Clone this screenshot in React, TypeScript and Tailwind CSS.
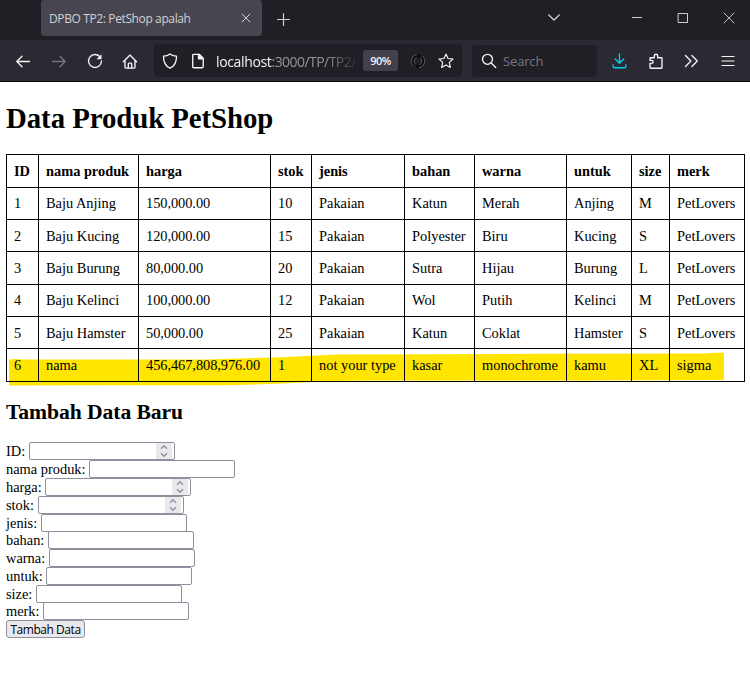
import type { ReactNode } from "react";

const header = ["ID", "nama produk", "harga", "stok", "jenis", "bahan", "warna", "untuk", "size", "merk"];
const rows = [
  ["1", "Baju Anjing", "150,000.00", "10", "Pakaian", "Katun", "Merah", "Anjing", "M", "PetLovers"],
  ["2", "Baju Kucing", "120,000.00", "15", "Pakaian", "Polyester", "Biru", "Kucing", "S", "PetLovers"],
  ["3", "Baju Burung", "80,000.00", "20", "Pakaian", "Sutra", "Hijau", "Burung", "L", "PetLovers"],
  ["4", "Baju Kelinci", "100,000.00", "12", "Pakaian", "Wol", "Putih", "Kelinci", "M", "PetLovers"],
  ["5", "Baju Hamster", "50,000.00", "25", "Pakaian", "Katun", "Coklat", "Hamster", "S", "PetLovers"],
  ["6", "nama", "456,467,808,976.00", "1", "not your type", "kasar", "monochrome", "kamu", "XL", "sigma"],
];

const fields = [
  { label: "ID:", width: "w-[23px]", row: "h-[18px]", number: true },
  { label: "nama produk:", width: "w-[83px]", row: "h-[18px]" },
  { label: "harga:", width: "w-[39px]", row: "h-[18px]", number: true },
  { label: "stok:", width: "w-[32px]", row: "h-[18px]", number: true },
  { label: "jenis:", width: "w-[35px]", row: "h-[17px]" },
  { label: "bahan:", width: "w-[42px]", row: "h-[18px]" },
  { label: "warna:", width: "w-[43px]", row: "h-[18px]" },
  { label: "untuk:", width: "w-[40px]", row: "h-[18px]" },
  { label: "size:", width: "w-[30px]", row: "h-[17px]" },
  { label: "merk:", width: "w-[37px]", row: "h-[18px]" },
];

function Icon({ className = "", children }: { className?: string; children: ReactNode }) {
  return (
    <svg viewBox="0 0 16 16" fill="none" stroke="currentColor" strokeWidth="1.35" strokeLinecap="round" strokeLinejoin="round" className={"size-4 shrink-0 " + className}>
      {children}
    </svg>
  );
}

function TabBar() {
  return (
    <div className="flex h-10 bg-[#201f25] pl-[41px] text-[#d0d0d3]">
      <div className="flex h-9 w-[221px] items-center rounded-b-[4px] rounded-t-[3px] bg-[#474650] pl-2 pr-2">
        <span className="w-[180px] whitespace-nowrap pt-[2px] text-[12px] tracking-[-0.38px]">DPBO TP2: PetShop apalah</span>
        <Icon className="ml-[9px]"><path d="m4 4 8 8m0-8-8 8" strokeWidth="1" /></Icon>
      </div>
      <div className="flex h-9 flex-1 items-center">
        <Icon className="ml-[13px] mt-px"><path d="M8.500 2.500v12M2.500 8.500h12" strokeWidth="1.200" /></Icon>
        <Icon className="ml-[255px]"><path d="m2.800 5 5.200 5 5.200-5" strokeWidth="1.300" /></Icon>
        <Icon className="ml-[67px]"><path d="M3 7.500h10" strokeWidth="1" strokeLinecap="butt" /></Icon>
        <Icon className="ml-[30px]"><path d="M3.500 3.500h9v9h-9z" strokeWidth="1" strokeLinejoin="miter" /></Icon>
        <Icon className="ml-[30px]"><path d="m3 3 10 10m0-10L3 13" strokeWidth=".9" /></Icon>
      </div>
    </div>
  );
}

function Toolbar() {
  return (
    <div className="flex h-[42px] items-center border-b border-[#0d0c12] bg-[#2b2a33] pl-[15px] text-[#f4f4f6]">
      <Icon><path d="M14.500 8.500H1.800M7 3.300 1.800 8.500 7 13.700" /></Icon>
      <Icon className="ml-5 text-[#77767c]"><path d="M1.500 8.500h12.700M9 3.300l5.200 5.200L9 13.700" /></Icon>
      <Icon className="ml-5">
        <path d="M13.300 4.200A6.500 6.500 0 1 0 14.500 8" />
        <path d="M14.500 1.300v5h-5z" fill="currentColor" stroke="none" />
      </Icon>
      <Icon className="ml-[19px]">
        <path d="M1.400 8.700 8 2.100l6.600 6.600M3 7.500v6.800c0 .5.300.8.800.8h8.400c.5 0 .8-.3.800-.8V7.500" />
        <path d="M6.300 15v-4c0-.6.300-.9.900-.9h1.600c.6 0 .9.300.9.900v4" />
      </Icon>
      <div className="ml-4 flex h-[33px] w-[308px] items-center rounded-[4px] bg-[#201f25] pl-2">
        <Icon><path d="M8 .9C10.100 2.600 12.200 3.100 14.500 3.100 14.700 8.700 12.700 13.200 8 15.200 3.300 13.200 1.300 8.700 1.500 3.100 3.800 3.100 5.900 2.600 8 .9z" /></Icon>
        <Icon className="ml-3">
          <path d="M3.800 1.300h5.400l4 4v8.300c0 .7-.4 1.100-1.100 1.100H3.800c-.7 0-1.100-.4-1.100-1.100V2.400c0-.7.400-1.100 1.100-1.100z" />
          <path d="M8.500 1.300v4.600h4.700z" fill="currentColor" />
        </Icon>
        <div className="ml-[10px] w-[139px] whitespace-nowrap pt-[2px] text-[14px] tracking-[-0.55px] [mask-image:linear-gradient(to_right,black_78%,rgba(0,0,0,0.15))]">
          <span className="tracking-[-0.35px]">localhost</span><span className="text-[#94939a]">:3000/TP/TP2/</span>
        </div>
        <div className="ml-2 flex h-[21px] w-[35px] items-center justify-center rounded-[3px] bg-[#42414d] pt-px text-[11px] font-semibold tracking-[-0.6px]">90%</div>
        <Icon className="ml-3 text-[#626168]">
          <path d="M6.600 1.300A6.900 6.900 0 0 0 3 12.700M9.400 14.700A6.900 6.900 0 0 0 13 3.300M6.600 4.300a4 4 0 0 0-1.700 6.200M9.400 11.700a4 4 0 0 0 1.700-6.200" strokeWidth=".8" />
          <path d="M9.500 2.900H8A5.200 5.200 0 0 0 4 11.500M6.500 13.100H8A5.200 5.200 0 0 0 12 4.500M8 .9l2 2-2 2M8 15.100l-2-2 2-2" stroke="#09080c" strokeWidth="1.300" />
        </Icon>
        <Icon className="ml-3"><path d="m8 1 2 4.500 5 .6-3.700 3.300 1 5L8 12l-4.300 2.400 1-5L1 6.100l5-.6z" strokeWidth="1.200" /></Icon>
      </div>
      <div className="ml-[10px] flex h-[32px] w-[125px] items-center rounded-[4px] bg-[#201f25] pl-[9px]">
        <Icon><circle cx="6.500" cy="6.300" r="5" /><path d="m10.200 10 4.500 4.500" /></Icon>
        <span className="ml-[6px] pt-[2px] text-[13px] tracking-[-0.15px] text-[#77767e]">Search</span>
      </div>
      <Icon className="ml-[14px] text-[#00d0f3]"><path d="M8.500.8v9.500M4.200 6l4.300 4.300L12.800 6M2.100 11.800v1.400c0 1 .5 1.500 1.500 1.500h9.800c1 0 1.500-.5 1.500-1.500v-1.400" /></Icon>
      <Icon className="ml-[21px]"><path d="M2 10.300v4.200c0 .4.300.7.700.7h10.600c.4 0 .7-.3.700-.7V5.400c0-.4-.3-.7-.7-.7H9.700V2.900C9.700 1.900 9 1.200 8 1.200s-1.700.7-1.700 1.700v1.800H2.700c-.4 0-.7.300-.7.700v2h1.500c1 0 1.600.6 1.600 1.500s-.6 1.400-1.600 1.400z" /></Icon>
      <Icon className="ml-[19px]"><path d="m2.500 2.500 5.400 5.500-5.400 5.500M8.900 2.500 14.300 8l-5.400 5.500" /></Icon>
      <Icon className="ml-[21px]"><path d="M2 3.500h12M2 8h12M2 12.500h12" strokeWidth="1.200" /></Icon>
    </div>
  );
}

function ProductTable() {
  return (
    <div className="relative mt-[18px] w-[739px]">
      <svg viewBox="0 0 739 40" className="absolute left-0 top-[196px] h-[40px] w-[739px]">
        <path d="M3 9.500 9 9 16 9.500H200L275 7.300 330 4.500 530 3.800 700 3.500 708 2.700H718V30L570 30.500H370L325 31 265 34 220 35.300H100L3 35.500z" fill="#ffe500" />
      </svg>
      <div role="table" className="relative grid grid-cols-[32px_100px_132px_41px_93px_70px_92px_65px_38px_75px] grid-rows-[33px_32px_32px_33px_32px_32px_33px] border-l border-t border-black text-[14.4px]">
        {header.map((h) => (
          <div role="columnheader" key={h} className="flex items-center whitespace-nowrap border-b border-r border-black pl-[7px] pt-px font-bold tracking-[-0.02px]">{h}</div>
        ))}
        {rows.map((row) =>
          row.map((cell, i) => (
            <div
              role="cell"
              key={row[0] + "-" + i}
              className={"flex items-center whitespace-nowrap border-b border-r border-black pl-[7px] " + (row[0] === "2" || row[0] === "5" ? "pt-[3px] " : "pt-px ") + (i === 2 ? "tracking-[-0.06px]" : "")}
            >
              {cell}
            </div>
          )),
        )}
      </div>
    </div>
  );
}

function Spinner() {
  return (
    <span className="mr-[2px] flex h-4 w-4 items-center justify-center bg-[#e9e9ed]">
      <svg viewBox="0 0 16 16" className="size-4" fill="none" stroke="#8f8f9d" strokeWidth="1.400"><path d="m5 5.800 3-3 3 3M5 10.200l3 3 3-3" /></svg>
    </span>
  );
}

export default function App() {
  return (
    <div className="h-[687px] w-[750px] overflow-hidden bg-white">
      <div className="font-['Open_Sans','Noto_Sans',sans-serif]">
        <TabBar />
        <Toolbar />
      </div>
      <main className="pl-[6px] pt-[19px] font-['Liberation_Serif',serif] text-[14.4px] text-black">
        <h1 className="h-[35px] whitespace-nowrap text-[28.8px] font-bold leading-[34px] tracking-[-0.05px]">Data Produk PetShop</h1>
        <ProductTable />
        <h2 className="mt-[18px] h-[24px] text-[21.6px] font-bold leading-[24px] tracking-[-0.06px]">Tambah Data Baru</h2>
        <form className="mt-[18px]">
          {fields.map((f) => (
            <div key={f.label} className={"flex items-start " + f.row}>
              <label className={"whitespace-nowrap leading-[18px] " + f.width}>{f.label}</label>
              <div className="flex h-[18px] w-[146px] items-center justify-end rounded-[2px] border border-[#8f8f9d] bg-white">
                {f.number && <Spinner />}
              </div>
            </div>
          ))}
          <button type="button" className="flex h-[18px] w-[79px] items-center justify-center whitespace-nowrap rounded-[3px] border border-[#8f8f9d] bg-[#e9e9ed] pt-px font-['Open_Sans','Noto_Sans',sans-serif] text-[12px] font-medium tracking-[-0.45px]">Tambah Data</button>
        </form>
      </main>
    </div>
  );
}
